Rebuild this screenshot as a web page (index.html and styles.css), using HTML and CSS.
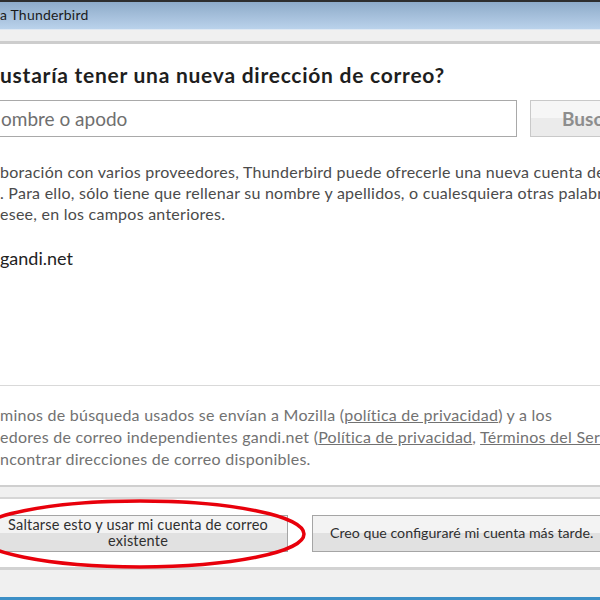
FILE: index.html
```html
<!doctype html>
<html>
    <head>
        <link rel="stylesheet" href="styles.css">
    </head>
    <body>
        <div class="window">
            <div class="titlebar">a Thunderbird</div>
            <div class="menustrip"></div>
            <div class="content">
                <h1 class="question">ustaría tener una nueva dirección de correo?</h1>
                <div class="search">
                    <input type="text" class="name" placeholder="ombre o apodo">
                    <button class="find">Buscar</button>
                </div>
                <p class="intro">
                    <span class="line">boración con varios proveedores, Thunderbird puede ofrecerle una nueva cuenta de</span>
                    <span class="line">. Para ello, sólo tiene que rellenar su nombre y apellidos, o cualesquiera otras palabras</span>
                    <span class="line">esee, en los campos anteriores.</span>
                </p>
                <div class="provider">gandi.net</div>
            </div>
            <div class="privacy">
                <span class="line">minos de búsqueda usados se envían a Mozilla (<a href="#">política de privacidad</a>) y a los</span>
                <span class="line">edores de correo independientes gandi.net (<a href="#">Política de privacidad</a>, <a href="#">Términos del Servicio</a>)</span>
                <span class="line">ncontrar direcciones de correo disponibles.</span>
            </div>
            <div class="gap"></div>
            <div class="actions">
                <button class="btn skip">Saltarse esto y usar mi cuenta de correo<br>existente</button>
                <button class="btn later">Creo que configuraré mi cuenta más tarde.</button>
                <svg class="mark" width="360" height="80" viewBox="0 0 360 80">
                    <ellipse cx="160" cy="36" rx="164" ry="33" fill="none" stroke="#e8000b" stroke-width="3.5"/>
                </svg>
            </div>
            <div class="statusbar"></div>
        </div>
    </body>
</html>
```

FILE: styles.css
```css
*{
    margin: 0;
    padding: 0;
    box-sizing: border-box;
}
body{
    width: 600px;
    height: 600px;
    overflow: hidden;
    background: #fff;
    font-family: Lato, "Open Sans", sans-serif;
}
.window{
    width: 600px;
    height: 600px;
    overflow: hidden;
    display: flex;
    flex-direction: column;
}
.titlebar{
    height: 29px;
    border-top: 2px solid #2e2e2e;
    background: linear-gradient(#8eabc9, #bad2eb);
    font-size: 14px;
    letter-spacing: 0.2px;
    line-height: 26px;
    color: #1b1b1b;
    white-space: nowrap;
}
.menustrip{
    height: 15px;
    background: #f0f0f0;
    border-top: 1px solid #dfe8f2;
    border-bottom: 3px solid #cdcdcd;
}
.content{
    height: 342px;
    padding-top: 20px;
    border-bottom: 1px solid #d9d9d9;
}
.question{
    font-size: 21px;
    letter-spacing: 0.75px;
    font-weight: bold;
    color: #1e1e1e;
    line-height: 22px;
    white-space: nowrap;
}
.search{
    display: flex;
    gap: 13px;
    margin-top: 14px;
    margin-left: -2px;
}
.name{
    flex-shrink: 0;
    width: 519px;
    height: 37px;
    border: 1px solid #a9a9a9;
    font-family: inherit;
    font-size: 19px;
    padding-left: 2px;
    outline: none;
}
.name::placeholder{
    color: #6f6f6f;
}
.find{
    flex-shrink: 0;
    width: 100px;
    height: 37px;
    border: 1px solid #c9c9c9;
    background: linear-gradient(#f6f6f6 50%, #ebebeb 50%);
    font-family: inherit;
    font-size: 19px;
    font-weight: bold;
    color: #8d8d8d;
    text-align: left;
    padding-left: 31px;
}
.intro{
    margin-top: 24px;
    font-size: 16px;
    letter-spacing: 0.25px;
    line-height: 21px;
    color: #4b4b4b;
}
.line{
    display: block;
    white-space: nowrap;
}
.provider{
    margin-top: 23px;
    font-size: 18px;
    color: #222;
}
.privacy{
    height: 99px;
    padding-top: 18px;
    font-size: 16px;
    letter-spacing: 0.25px;
    line-height: 22px;
    color: #727272;
}
.privacy a{
    color: #727272;
}
.gap{
    height: 14px;
    background: #f0f0f0;
    border-top: 2px solid #cfcfcf;
    border-bottom: 2px solid #d6d6d6;
}
.actions{
    position: relative;
    height: 71px;
    display: flex;
    align-items: center;
    gap: 24px;
    margin-left: -12px;
    background: #fff;
    border-bottom: 3px solid #d2d2d2;
}
.btn{
    flex-shrink: 0;
    height: 37px;
    border: 1px solid #a5a5a5;
    background: linear-gradient(#f3f3f3 50%, #e1e1e1 50%);
    font-family: inherit;
    font-size: 14.5px;
    letter-spacing: 0.2px;
    line-height: 16px;
    color: #2f2f2f;
}
.skip{
    width: 300px;
}
.later{
    width: 320px;
    font-size: 14.2px;
    letter-spacing: 0;
    text-align: left;
    padding-left: 17px;
    white-space: nowrap;
}
.mark{
    position: absolute;
    left: -8px;
    top: -1px;
}
.statusbar{
    flex: 1;
    background: #f0f0f0;
    border-bottom: 3px solid #3c8fc6;
}
```
